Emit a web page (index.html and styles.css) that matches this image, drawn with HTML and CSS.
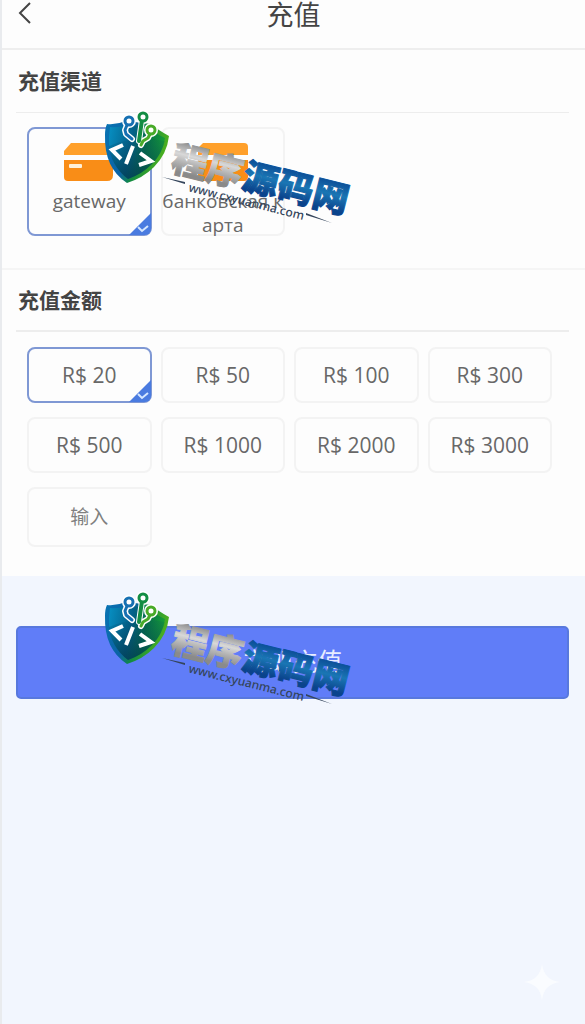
FILE: index.html
```html
<!DOCTYPE html>
<html lang="zh-CN">
<head>
<meta charset="utf-8">
<meta name="viewport" content="width=device-width, initial-scale=1">
<title>充值</title>
<link rel="stylesheet" href="styles.css">
</head>
<body>
<svg class="defs" aria-hidden="true">
  <defs>
    <linearGradient id="rim" x1="0" y1="0" x2="1" y2="0.3"><stop offset="0" stop-color="#0874b4"/><stop offset=".45" stop-color="#0b62a4"/><stop offset=".62" stop-color="#118a42"/><stop offset="1" stop-color="#4cb01e"/></linearGradient>
    <linearGradient id="face" x1="0" y1="0" x2="1" y2="0.2"><stop offset="0" stop-color="#0790c4"/><stop offset=".45" stop-color="#046088"/><stop offset=".7" stop-color="#067048"/><stop offset="1" stop-color="#169c38"/></linearGradient>
    <linearGradient id="shade" x1="0" y1="0" x2="0" y2="1"><stop offset="0" stop-color="#03405c" stop-opacity=".1"/><stop offset="1" stop-color="#023a50" stop-opacity=".75"/></linearGradient>
    <linearGradient id="silver" x1="0" y1="0" x2="0" y2="1"><stop offset="0.2" stop-color="#8a8a8a"/><stop offset=".45" stop-color="#d8d8d8"/><stop offset=".6" stop-color="#b4b4b4"/><stop offset=".8" stop-color="#8a8a8a"/></linearGradient>
    <linearGradient id="blue" x1="0" y1="0" x2="0" y2="1"><stop offset=".2" stop-color="#0a4a94"/><stop offset=".5" stop-color="#1a76b4"/><stop offset=".8" stop-color="#0a438c"/></linearGradient>
    <symbol id="brand" viewBox="0 0 260 120">
      <path d="M9 14Q18 15 28 11L53 14Q60 20 71 26Q69 44 56 57Q45 68 29 73Q6 58 7 25Q7 18 9 14Z" fill="url(#rim)"/>
      <path d="M12 17Q22 18 30 14L52 18Q58 24 67 28Q65 43 54 54Q44 64 30 69Q10 54 11 27Z" fill="url(#face)"/>
      <path d="M11 36Q38 24 67 31Q63 45 54 54Q44 64 30 69Q13 56 11 36Z" fill="url(#shade)"/>
      <g fill="none" stroke-linecap="round" stroke-linejoin="round">
        <g stroke="#fff" stroke-width="6"><path d="M29 15L27 20L28 24L34 29M44 10L41 31M52 24L50 28L45 31L43 35"/><circle cx="31" cy="11" r="4"/><circle cx="45" cy="7" r="4"/><circle cx="53" cy="20" r="4"/></g>
        <path d="M29 15L27 20L28 24L34 29" stroke="#1670b2" stroke-width="3"/>
        <path d="M44 10L41 31" stroke="#138d43" stroke-width="4"/>
        <path d="M52 24L50 28L45 31L43 35" stroke="#48aa28" stroke-width="3"/>
        <circle cx="31" cy="11" r="4" fill="#fff" stroke="#1670b2" stroke-width="3"/>
        <circle cx="45" cy="7" r="4" fill="#fff" stroke="#138d43" stroke-width="3"/>
        <circle cx="53" cy="20" r="4" fill="#fff" stroke="#48aa28" stroke-width="3"/>
        <path d="M25 35L14 40L23 49M35 36L28 54M42 43L53 51L41 55" stroke="#fff" stroke-width="4" stroke-linecap="butt" stroke-linejoin="miter"/>
      </g>
      <path d="M64 67L87 72V74ZM208 105V103L234 113Z" fill="#34455b"/>
      <g transform="rotate(14 70 66)">
        <text class="brand-name" x="70" y="60" fill="url(#silver)" stroke="url(#silver)">程序</text>
        <text class="brand-name" x="143" y="60" fill="url(#blue)" stroke="url(#blue)">源码网</text>
        <text class="brand-url" x="93" y="76">www.cxyuanma.com</text>
      </g>
    </symbol>
    <symbol id="corner" viewBox="0 0 22 22"><path d="M22 0V22H0Z" fill="#4a7be0"/><path d="M9 14L13 18L19 13" fill="none" stroke="#d5e7ff" stroke-width="2"/></symbol>
  </defs>
</svg>
<header class="topbar">
  <button class="back" type="button" aria-label="返回"><svg viewBox="0 0 14 24"><path d="M12 2L2 12L12 22" fill="none" stroke="#444" stroke-width="2"/></svg></button>
  <h1 class="title">充值</h1>
</header>
<main class="page">
  <section class="panel channels">
    <h2 class="heading">充值渠道</h2>
    <div class="grid">
      <button class="option channel selected" type="button" aria-pressed="true">
        <svg class="card-icon" viewBox="0 0 50 40"><path d="M7 0H42Q49 0 49 8V12H0V8Z" fill="#ffa02b"/><path d="M0 17H49V32Q49 38 43 38H4Q0 38 0 34Z" fill="#f98d17"/><rect x="5" y="21" width="13" height="4" rx="1" fill="#fff0d8"/></svg>
        <span>gateway</span>
        <svg class="corner"><use href="#corner"/></svg>
      </button>
      <button class="option channel" type="button">
        <svg class="card-icon" viewBox="0 0 50 40"><path d="M5 0H46Q50 0 50 4V12H0V5Z" fill="#ffa02b"/><path d="M0 17H50V34Q50 38 46 38H4Q0 38 0 34Z" fill="#f98d17"/></svg>
        <span>банковская к<br>арта</span>
      </button>
    </div>
    <svg class="brand" viewBox="0 0 260 120" role="img" aria-label="程序源码网"><use href="#brand"/></svg>
  </section>
  <section class="panel amounts">
    <h2 class="heading">充值金额</h2>
    <div class="grid">
      <button class="option selected" type="button" aria-pressed="true">R$ 20<svg class="corner"><use href="#corner"/></svg></button>
      <button class="option" type="button">R$ 50</button>
      <button class="option" type="button">R$ 100</button>
      <button class="option" type="button">R$ 300</button>
      <button class="option" type="button">R$ 500</button>
      <button class="option" type="button">R$ 1000</button>
      <button class="option" type="button">R$ 2000</button>
      <button class="option" type="button">R$ 3000</button>
      <input class="option custom" type="text" placeholder="输入" aria-label="输入">
    </div>
  </section>
  <div class="action">
    <button class="submit" type="button">立即充值</button>
    <svg class="brand" viewBox="0 0 260 120" role="img" aria-label="程序源码网"><use href="#brand"/></svg>
  </div>
</main>
<svg class="sparkle" viewBox="0 0 36 36" aria-hidden="true"><path d="M18 0Q20 16 36 18Q20 20 18 36Q16 20 0 18Q16 16 18 0Z" fill="#fafcff"/></svg>
</body>
</html>
```
FILE: styles.css
```css
* { box-sizing: border-box; }
body {
  margin: 0;
  min-height: 100vh;
  background: #f2f6fe;
  border-left: 2px solid #e9ebee;
  font-family: "Open Sans", "Noto Sans CJK SC", sans-serif;
  color: #444;
}
button, input { font: inherit; color: inherit; }
.defs { position: absolute; width: 0; height: 0; }
.topbar {
  display: grid;
  grid-template-columns: 48px 1fr 48px;
  height: 50px;
  padding-bottom: 18px;
  align-items: start;
  background: #fdfdfd;
  border-bottom: 2px solid #eee;
}
.back { padding: 0 0 0 16px; border: 0; background: none; height: 26px; }
.back svg { display: block; width: 14px; height: 24px; }
.title { margin: 0; font-size: 27px; line-height: 30px; font-weight: 400; text-align: center; }
.panel { position: relative; padding: 0 16px 0 14px; background: #fdfdfd; }
.channels { padding-bottom: 32px; border-bottom: 2px solid #f5f5f5; }
.amounts { padding-bottom: 29px; }
.heading {
  margin: 0 0 15px;
  padding: 16px 2px;
  border-bottom: 1px solid #ededed;
  font-size: 21px;
  line-height: 30px;
  font-weight: 700;
}
.channels .heading { margin-bottom: 14px; }
.amounts .heading { border-bottom-width: 2px; line-height: 28px; }
.grid {
  display: grid;
  grid-template-columns: repeat(4, 1fr);
  gap: 14px 9px;
  padding: 0 17px 0 11px;
}
.option {
  position: relative;
  min-width: 0;
  height: 56px;
  padding: 0;
  border: 2px solid #f3f3f3;
  border-radius: 8px;
  background: #fdfdfd;
  font-size: 21px;
  font-weight: 500;
  line-height: 24px;
  text-align: center;
  color: #686868;
}
.selected { border-color: #7f98d4; }
.channel {
  display: flex;
  flex-direction: column;
  align-items: center;
  height: 109px;
  padding-top: 14px;
  font-size: 19px;
}
.channel span { margin-top: 6px; white-space: nowrap; }
.card-icon { flex: none; width: 50px; height: 40px; }
.corner { position: absolute; right: -1px; bottom: -1px; width: 22px; height: 22px; border-bottom-right-radius: 6px; }
.custom { width: 100%; height: 60px; font-size: 19px; font-weight: 400; }
.custom::placeholder { color: #808080; opacity: 1; }
.action { position: relative; padding: 50px 16px 0 14px; }
.submit {
  display: block;
  width: 100%;
  height: 73px;
  padding: 0 0 6px;
  border: 2px solid #5878dd;
  border-radius: 5px;
  background: #607df8;
  color: #e8edff;
  font-size: 25px;
}
.brand { position: absolute; left: 96px; top: 60px; width: 260px; height: 120px; overflow: visible; pointer-events: none; }
.action .brand { top: 15px; }
.brand-name { font: 900 36px "Noto Sans CJK SC", sans-serif; stroke-width: 1px; }
.brand-url { font: 500 12px "Noto Sans", sans-serif; fill: #34455b; }
.sparkle { position: absolute; right: 25px; bottom: 24px; width: 36px; height: 36px; }
```
